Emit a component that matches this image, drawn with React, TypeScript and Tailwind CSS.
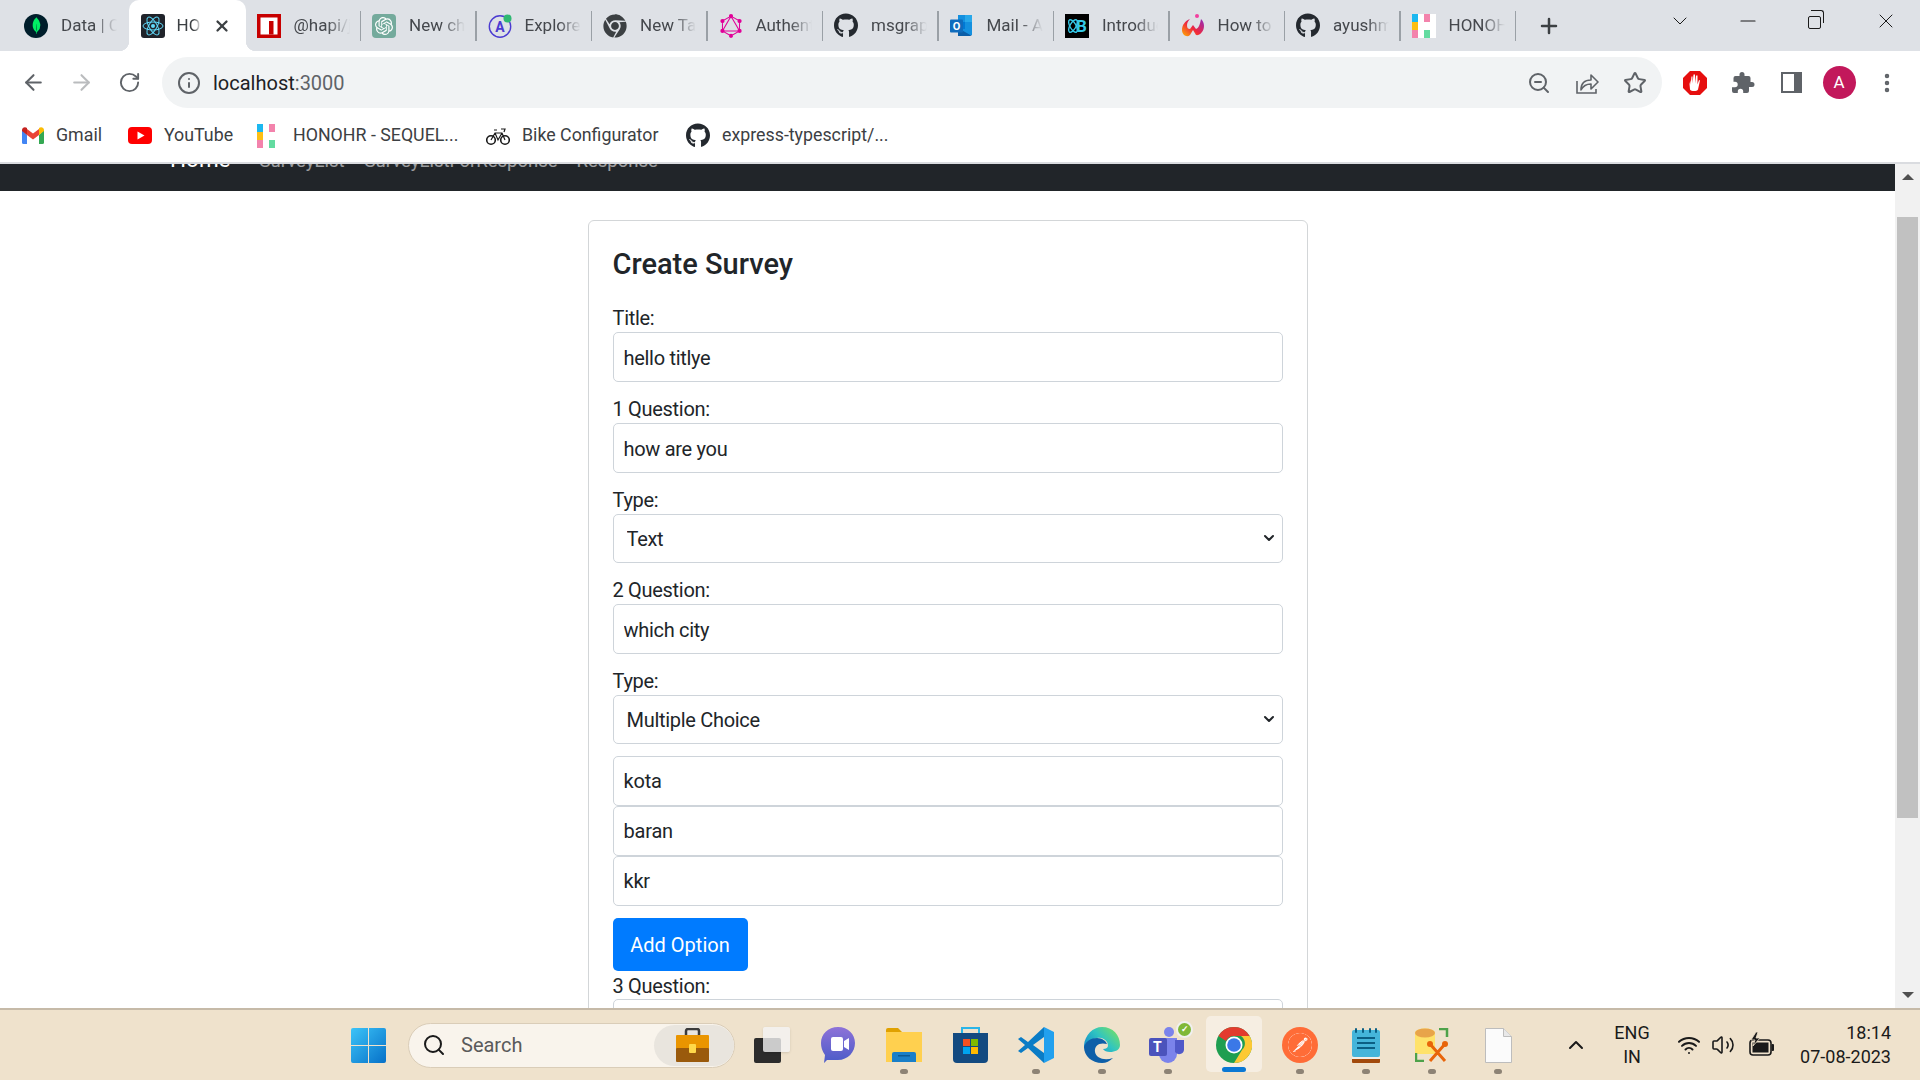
import React from 'react';
import { FaGithub, FaChrome } from 'react-icons/fa';
import { SiMongodb, SiOpenai, SiGraphql, SiPostman } from 'react-icons/si';
import { ChevronDown, ChevronUp, Minus, X, Plus, ArrowLeft, ArrowRight, RotateCw, Info, ZoomOut, Star, MoreVertical, Search, Wifi, Volume2 } from 'lucide-react';

const ReactIcon = () => (
  <svg width="24" height="24" viewBox="0 0 24 24">
    <rect width="24" height="24" rx="3" fill="#20232a" />
    <g fill="none" stroke="#61dafb" strokeWidth="1">
      <ellipse cx="12" cy="12" rx="10" ry="4" />
      <ellipse cx="12" cy="12" rx="10" ry="4" transform="rotate(60 12 12)" />
      <ellipse cx="12" cy="12" rx="10" ry="4" transform="rotate(120 12 12)" />
    </g>
    <circle cx="12" cy="12" r="2" fill="#61dafb" />
  </svg>
);

const MongoIcon = () => (
  <div className="w-6 h-6 rounded-full bg-[#001e2b] flex items-center justify-center">
    <SiMongodb className="text-[#00ed64] text-[17px]" />
  </div>
);

const NpmIcon = () => (
  <svg width="24" height="24" viewBox="0 0 24 24">
    <rect width="24" height="24" fill="#c70000" />
    <rect x="3.5" y="3.5" width="17" height="17" fill="#fff" />
    <rect x="12" y="7" width="4.5" height="13.5" fill="#c70000" />
  </svg>
);

const OpenAiIcon = () => (
  <div className="w-6 h-6 rounded-[4px] bg-[#74aa9c] flex items-center justify-center">
    <SiOpenai className="text-white text-[18px]" />
  </div>
);

const ExploreIcon = () => (
  <svg width="24" height="24" viewBox="0 0 24 24">
    <circle cx="12" cy="12.5" r="10.7" fill="none" stroke="#4b3bd1" strokeWidth="1.4" />
    <text x="12" y="17.5" textAnchor="middle" fontSize="14" fontWeight="700" fontFamily="Roboto" fill="#4b3bd1">A</text>
    <circle cx="19.5" cy="4.5" r="4" fill="#2eb872" />
  </svg>
);

const OutlookIcon = () => (
  <svg width="24" height="24" viewBox="0 0 24 24">
    <path d="M8 1h14v20H8z" fill="#1490df" />
    <path d="M15 1h7v7h-7z" fill="#28a8ea" />
    <path d="M8 8h7v7H8z" fill="#0078d4" />
    <path d="M8 14l14 8H8z" fill="#0a5ea8" />
    <rect y="5.5" width="13" height="13" rx="1" fill="#0f6cbd" />
    <text x="6.5" y="16" textAnchor="middle" fontSize="11" fontWeight="700" fontFamily="Roboto" fill="#fff">O</text>
  </svg>
);

const IntroIcon = () => (
  <svg width="24" height="24" viewBox="0 0 24 24">
    <rect width="24" height="24" fill="#000" />
    <g fill="none" stroke="#35c8e6" strokeWidth="1.4">
      <ellipse cx="8" cy="12" rx="7" ry="3" transform="rotate(60 8 12)" />
      <ellipse cx="8" cy="12" rx="7" ry="3" transform="rotate(120 8 12)" />
    </g>
    <text x="16.5" y="18" textAnchor="middle" fontSize="17" fontWeight="700" fontFamily="Roboto" fill="#35c8e6">B</text>
  </svg>
);

const HowToIcon = () => (
  <svg width="24" height="24" viewBox="0 0 24 24">
    <defs>
      <linearGradient id="howto" x1="0" y1="1" x2="1" y2="0">
        <stop offset="0" stopColor="#ffb100" />
        <stop offset="0.45" stopColor="#f0283c" />
        <stop offset="1" stopColor="#8a2bc9" />
      </linearGradient>
    </defs>
    <circle cx="16" cy="2" r="2" fill="#f23fa0" />
    <path d="M9 5C4 7 1 11 1 16c0 5 5 8 8 5l3-5 3 5c3 1 8-3 8-9 0-3-1-5-3-7-1 5-2 9-5 10l-3-4-3 4c-2 0-3-1-3-4 0-3 2-5 4-7z" fill="url(#howto)" />
  </svg>
);

const HonoIcon = () => (
  <svg width="24" height="24" viewBox="0 0 24 24">
    <rect width="24" height="24" fill="#fff" />
    <rect x="0" y="0" width="6" height="8" fill="#1cb8f0" />
    <rect x="12" y="0" width="6" height="8" fill="#f383ac" />
    <rect x="0" y="8" width="6" height="8" fill="#fdbf14" />
    <rect x="0" y="16" width="6" height="8" fill="#f383ac" />
    <rect x="12" y="16" width="6" height="8" fill="#63dba0" />
  </svg>
);

const GmailIcon = () => (
  <svg width="22" height="17" viewBox="0 0 22 17">
    <path d="M0 3v12.500a1.500 1.500 0 0 0 1.500 1.500H5V8z" fill="#4285f4" />
    <path d="M17 8v9h3.500a1.500 1.500 0 0 0 1.500-1.500V3z" fill="#34a853" />
    <path d="M5 8V2l6 4.500L17 2v6l-6 4.500z" fill="#ea4335" />
    <path d="M0 3c0-2.500 3-3.700 5-2v7L0 4z" fill="#c5221f" />
    <path d="M17 1c2-1.700 5-.5 5 2v1l-5 4z" fill="#fbbc04" />
  </svg>
);

const YoutubeIcon = () => (
  <svg width="24" height="17" viewBox="0 0 24 17">
    <rect width="24" height="17" rx="4" fill="#f00" />
    <path d="M9.500 4.500v8l7-4z" fill="#fff" />
  </svg>
);

const BikeIcon = () => (
  <svg width="24" height="20" viewBox="0 0 24 20" fill="none" stroke="#1a1a1a">
    <circle cx="5" cy="14" r="4.300" strokeWidth="1.600" />
    <circle cx="19" cy="14" r="4.300" strokeWidth="1.600" />
    <path d="M5 14l4-7h7l3 7M9 7l3 7 4-7M8 4h3M15 3h4l-1 3" strokeWidth="1.200" />
  </svg>
);

const ShareIcon = () => (
  <svg width="24" height="24" viewBox="0 0 24 24" fill="none" stroke="#5f6368" strokeWidth="1.600">
    <path d="M2 10v12h19v-4" />
    <path d="M6 19c0-7 4-10 10-10V4l7 7-7 7v-5c-5 0-8 2-10 6z" strokeLinejoin="round" />
  </svg>
);

const UblockIcon = () => (
  <svg width="24" height="24" viewBox="0 0 24 24">
    <path d="M7 0h10l7 7v10l-7 7H7l-7-7V7z" fill="#e60f0f" />
    <path d="M6.500 13l1-4v5l1-8.500 1 0v7l1-9h1.500v9l1-8 1.500 0v9l1.500-4.500 1 .5-2 9c-1 2-7 2-8 0z" fill="#fff" />
  </svg>
);

const PuzzleIcon = () => (
  <svg width="24" height="24" viewBox="0 0 24 24" fill="#5f6368">
    <path d="M21 11h-1.500V7a2 2 0 0 0-2-2h-4V3.500a2.500 2.500 0 0 0-5 0V5h-4a2 2 0 0 0-2 2v3.800h1.500a2.700 2.700 0 0 1 0 5.400H1V20a2 2 0 0 0 2 2h3.800v-1.500a2.700 2.700 0 0 1 5.400 0V22H16a2 2 0 0 0 2-2v-4h3a2.500 2.500 0 0 0 0-5z" />
  </svg>
);

const SidePanelIcon = () => (
  <div className="w-[21px] h-[21px] border-[#5f6368] border-y-[2px] border-l-[2px] border-r-[8px]" />
);

const WindowsIcon = () => (
  <svg width="35" height="35" viewBox="0 0 35 35">
    <defs>
      <linearGradient id="win" x1="0" y1="0" x2="1" y2="1">
        <stop offset="0" stopColor="#3cc4f8" />
        <stop offset="1" stopColor="#0670c8" />
      </linearGradient>
    </defs>
    <path d="M2 0h15v17H0V2a2 2 0 0 1 2-2zM18 0h15a2 2 0 0 1 2 2v15H18zM0 18h17v17H2a2 2 0 0 1-2-2zM18 18h17v15a2 2 0 0 1-2 2H18z" fill="url(#win)" />
  </svg>
);

const BriefcaseIcon = () => (
  <svg width="33" height="34" viewBox="0 0 33 34">
    <path d="M10 8V3a2 2 0 0 1 2-2h9a2 2 0 0 1 2 2v5" fill="none" stroke="#3b3b3b" strokeWidth="2.500" />
    <rect y="7" width="33" height="14" rx="1" fill="#ea9500" />
    <rect y="20" width="33" height="14" rx="1" fill="#9a5a0c" />
    <rect x="13" y="16" width="7" height="9" rx="1" fill="#ffd84a" />
  </svg>
);

const TaskViewIcon = () => (
  <div className="relative w-[36px] h-[36px]">
    <div className="absolute left-0 bottom-0 w-[27px] h-[25px] bg-[#2c2c2c] rounded-[2px]" />
    <div className="absolute right-0 top-0 w-[27px] h-[25px] bg-[#f4f4f4]/80 rounded-[2px] shadow-sm" />
  </div>
);

const MeetIcon = () => (
  <svg width="34" height="36" viewBox="0 0 34 36">
    <defs>
      <linearGradient id="meet" x1="0" y1="0" x2="0" y2="1">
        <stop offset="0" stopColor="#8e72d8" />
        <stop offset="1" stopColor="#4a5bc8" />
      </linearGradient>
    </defs>
    <path d="M17 0c10 0 17 7 17 16s-7 17-17 17H6l-3 3 1-8C1 24 0 20 0 16 0 7 7 0 17 0z" fill="url(#meet)" />
    <rect x="10" y="10" width="12" height="14" rx="2" fill="#fff" />
    <path d="M23 14l5-3v12l-5-3z" fill="#fff" />
  </svg>
);

const FolderIcon = () => (
  <svg width="36" height="34" viewBox="0 0 36 34">
    <path d="M0 2a2 2 0 0 1 2-2h10l4 4h-16z" fill="#e0a100" />
    <path d="M0 4h36v30H0z" fill="#ffd04f" />
    <path d="M6 34V26a2 2 0 0 1 2-2h20a2 2 0 0 1 2 2v8z" fill="#1a7fc8" />
    <rect x="12" y="27" width="12" height="1.500" fill="#0c5a94" />
  </svg>
);

const StoreIcon = () => (
  <svg width="35" height="36" viewBox="0 0 35 36">
    <path d="M9 7V1h17v6" fill="none" stroke="#2ab5e8" strokeWidth="2" />
    <path d="M0 6h35v26a4 4 0 0 1-4 4H4a4 4 0 0 1-4-4z" fill="#134a80" />
    <rect x="10" y="12" width="7" height="7" fill="#f25022" />
    <rect x="18" y="12" width="7" height="7" fill="#7fba00" />
    <rect x="10" y="20" width="7" height="7" fill="#00a4ef" />
    <rect x="18" y="20" width="7" height="7" fill="#ffb900" />
  </svg>
);

const VscodeIcon = () => (
  <svg width="36" height="36" viewBox="0 0 36 36">
    <path d="M26 0l10 5v26l-10 5z" fill="#22a0ee" />
    <path d="M26 0L10 15 3 10 0 12l7 6-7 6 3 2 7-5 16 15v-10l-11-8 11-8z" fill="#0a7cc6" />
  </svg>
);

const EdgeIcon = () => (
  <svg width="36" height="36" viewBox="0 0 36 36">
    <defs>
      <linearGradient id="edgeTop" x1="0" y1="1" x2="1" y2="0.300">
        <stop offset="0" stopColor="#0c7fcf" />
        <stop offset="0.600" stopColor="#30c5c0" />
        <stop offset="1" stopColor="#6ddc70" />
      </linearGradient>
    </defs>
    <path d="M18 0c11 0 18 8 18 18 0 5-5 7-10 7-3 0-6-1-7-3 5 0 6-3 4-7-2-3-6-5-10-4C6 13 2 17 0 22c-1-12 8-22 18-22z" fill="url(#edgeTop)" />
    <path d="M0 20c2-6 7-9 13-9 5 0 9 3 10 6-7-2-13 1-12 8 1 6 9 9 18 6-3 3-7 5-11 5C8 36 0 29 0 20z" fill="#0e5fa8" />
  </svg>
);

const TeamsIcon = () => (
  <div className="relative left-[3px] w-[44px] h-[38px]">
    <svg className="absolute left-0 top-0" width="44" height="38" viewBox="0 0 44 38">
      <circle cx="20" cy="6" r="5" fill="#7b83eb" />
      <path d="M10 12h18v16a9 9 0 0 1-18 0z" fill="#7b83eb" />
      <path d="M26 14h9v10a5 5 0 0 1-9 2z" fill="#5059c9" />
      <rect x="0" y="12" width="18" height="18" rx="2" fill="#4b53bc" />
    </svg>
    <span className="absolute left-[4px] top-[11px] text-white text-[14px] font-bold">T</span>
    <div className="absolute right-0 top-[-5px] w-[17px] h-[17px] rounded-full bg-[#7fb838] border-2 border-[#f0f0f0] flex items-center justify-center text-white text-[9px] font-bold">✓</div>
  </div>
);

const ChromeIcon = () => (
  <svg width="36" height="36" viewBox="0 0 36 36">
    <circle cx="18" cy="18" r="18" fill="#1e9e50" />
    <path d="M18 0a18 18 0 0 1 15.600 9H18a9 9 0 0 0-8 5L2.400 9A18 18 0 0 1 18 0z" fill="#e33b2e" />
    <path d="M33.600 9A18 18 0 0 1 18 36l8-13a9 9 0 0 0-1-14z" fill="#fcc934" />
    <circle cx="18" cy="18" r="8.500" fill="#fff" />
    <circle cx="18" cy="18" r="6.800" fill="#3b78e7" />
  </svg>
);

const PostmanIcon = () => (
  <div className="w-9 h-9 rounded-full bg-[#ff6c37] flex items-center justify-center">
    <SiPostman className="text-[#ff6c37] bg-white rounded-full text-[24px]" />
  </div>
);

const NotepadIcon = () => (
  <svg width="28" height="35" viewBox="0 0 28 35">
    <rect y="2" width="28" height="27" rx="2" fill="#45b5da" />
    <rect y="29" width="28" height="6" rx="1" fill="#a24a0c" />
    <rect y="29" width="28" height="2" fill="#f2efe8" />
    <g fill="#0b5f84">
      <rect x="3" y="0" width="2" height="5" rx="1" />
      <rect x="10" y="0" width="2" height="5" rx="1" />
      <rect x="17" y="0" width="2" height="5" rx="1" />
      <rect x="23" y="0" width="2" height="5" rx="1" />
      <rect x="5" y="9" width="18" height="2" />
      <rect x="5" y="14" width="18" height="2" />
      <rect x="5" y="19" width="18" height="2" />
    </g>
  </svg>
);

const DbToolIcon = () => (
  <svg width="34" height="34" viewBox="0 0 34 34">
    <path d="M0 5c0-6 20-6 20 0v21H0z" fill="#ffe26a" />
    <ellipse cx="10" cy="5" rx="10" ry="4.500" fill="#e8a44a" />
    <path d="M24 1h8v8M1 25v8h8" fill="none" stroke="#4ea24a" strokeWidth="2.500" />
    <path d="M15 16l15 17M30 16L15 33" stroke="#e8650a" strokeWidth="3" />
    <circle cx="15" cy="16" r="3" fill="#e8650a" />
    <circle cx="30" cy="16" r="3" fill="#e8650a" />
  </svg>
);

const FileIcon = () => (
  <svg width="27" height="35" viewBox="0 0 27 35">
    <path d="M.5.500h18l8 8v26H.5z" fill="#fbfbfb" stroke="#bdbdbd" />
    <path d="M18.500.500v8h8" fill="#e8e8e8" stroke="#bdbdbd" />
  </svg>
);

const BatteryIcon = () => (
  <svg width="25" height="26" viewBox="0 0 25 26">
    <rect x="1" y="8" width="21" height="15" rx="3" fill="none" stroke="#1a1a1a" strokeWidth="1.600" />
    <rect x="3.500" y="10.500" width="16" height="10" fill="#1a1a1a" />
    <rect x="22.500" y="12" width="2.500" height="7" rx="1" fill="#1a1a1a" />
    <path d="M7 0L2 8h4l-2 6 7-8H7l2-6z" fill="#1a1a1a" stroke="#efe2cc" strokeWidth=".8" />
  </svg>
);

const tabs: { title: string; icon: React.ReactNode; active?: boolean; noSep?: boolean }[] = [
  { title: 'Data | Cloud', icon: <MongoIcon />, noSep: true },
  { title: 'HONOHR', icon: <ReactIcon />, active: true },
  { title: '@hapi/joi', icon: <NpmIcon /> },
  { title: 'New chat', icon: <OpenAiIcon /> },
  { title: 'Explore', icon: <ExploreIcon /> },
  { title: 'New Tab', icon: <FaChrome className="text-[24px] text-[#3c4043]" /> },
  { title: 'Authentication', icon: <SiGraphql className="text-[24px] text-[#e10098]" /> },
  { title: 'msgraph', icon: <FaGithub className="text-[25px] text-[#24292f]" /> },
  { title: 'Mail - A', icon: <OutlookIcon /> },
  { title: 'Introduction', icon: <IntroIcon /> },
  { title: 'How to', icon: <HowToIcon /> },
  { title: 'ayushman', icon: <FaGithub className="text-[25px] text-[#24292f]" /> },
  { title: 'HONOHR', icon: <HonoIcon /> },
];

const bookmarks: { title: string; icon: React.ReactNode; width: string; iconBox: string }[] = [
  { title: 'Gmail', icon: <GmailIcon />, width: 'w-[106px]', iconBox: 'w-[22px]' },
  { title: 'YouTube', icon: <YoutubeIcon />, width: 'w-[129px]', iconBox: 'w-[24px]' },
  { title: 'HONOHR - SEQUEL...', icon: <HonoIcon />, width: 'w-[229px]', iconBox: 'w-[24px]' },
  { title: 'Bike Configurator', icon: <BikeIcon />, width: 'w-[200px]', iconBox: 'w-[24px]' },
  { title: 'express-typescript/...', icon: <FaGithub className="text-[25px] text-[#24292f]" />, width: 'w-[240px]', iconBox: 'w-[24px]' },
];

const taskbarApps: { icon: React.ReactNode; running?: boolean; active?: boolean }[] = [
  { icon: <TaskViewIcon /> },
  { icon: <MeetIcon /> },
  { icon: <FolderIcon />, running: true },
  { icon: <StoreIcon /> },
  { icon: <VscodeIcon />, running: true },
  { icon: <EdgeIcon />, running: true },
  { icon: <TeamsIcon />, running: true },
  { icon: <ChromeIcon />, active: true },
  { icon: <PostmanIcon />, running: true },
  { icon: <NotepadIcon />, running: true },
  { icon: <DbToolIcon />, running: true },
  { icon: <FileIcon />, running: true },
];

const BrowserTab = ({ title, icon, active, noSep }: (typeof tabs)[number]) => {
  if (active) {
    return (
      <div className="relative w-[117px] h-[51px] bg-white rounded-t-[10px] flex items-center pl-[12px] shrink-0">
        <span className="absolute -left-[10px] bottom-0 w-[10px] h-[10px] bg-[radial-gradient(circle_at_0_0,#dee1e6_10px,#fff_10.5px)]" />
        <span className="absolute -right-[10px] bottom-0 w-[10px] h-[10px] bg-[radial-gradient(circle_at_100%_0,#dee1e6_10px,#fff_10.5px)]" />
        <div className="w-6 shrink-0">{icon}</div>
        <div className="ml-3 w-[24px] overflow-hidden whitespace-nowrap text-[17px] text-[#3c4043] [mask-image:linear-gradient(to_right,black_70%,transparent)]">
          {title}
        </div>
        <X className="ml-[12px] text-[#3c4043]" size={18} strokeWidth={3} />
      </div>
    );
  }

  return (
    <div className="w-[115.5px] h-[51px] flex items-center pl-[11px] shrink-0">
      <div className="w-6 h-6 shrink-0 flex items-center justify-center">{icon}</div>
      <div className="ml-[13px] w-[56px] overflow-hidden whitespace-nowrap text-[17px] text-[#45484d] [mask-image:linear-gradient(to_right,black_60%,transparent)]">
        {title}
      </div>
      {!noSep && <span className="ml-auto w-[1.5px] h-[30px] bg-[#9aa0a6]" />}
    </div>
  );
};

const Field = ({ label, value }: { label: string; value: string }) => (
  <>
    <label className="block h-[30px] leading-[33px] tracking-[-0.3px] text-[#212529]">{label}</label>
    <input
      readOnly
      value={value}
      className="block w-full h-[50px] border border-[#ced4da] rounded-[5px] pl-[10px] pt-[1px] tracking-[-0.3px] text-[#212529] outline-none bg-white mb-[11px]"
    />
  </>
);

const SelectField = ({ value, options, className }: { value: string; options: string[]; className: string }) => (
  <>
    <label className="block h-[30px] leading-[33px] tracking-[-0.3px] text-[#212529]">Type:</label>
    <div className={`relative h-[49px] ${className}`}>
      <select
        value={value}
        onChange={() => undefined}
        className="appearance-none block w-full h-full border border-[#ced4da] rounded-[5px] pl-[13px] tracking-[-0.3px] text-[#212529] outline-none bg-white"
      >
        {options.map((o) => (
          <option key={o}>{o}</option>
        ))}
      </select>
      <ChevronDown className="absolute right-[6px] top-[16px] text-[#212529]" size={16} strokeWidth={3} />
    </div>
  </>
);

const OptionInput = ({ value }: { value: string }) => (
  <input
    readOnly
    value={value}
    className="block w-full h-[50px] border border-[#ced4da] rounded-[5px] pl-[10px] tracking-[-0.2px] text-[#212529] outline-none bg-white"
  />
);

const App = () => {
  return (
    <div className="w-[1920px] h-[1080px] flex flex-col overflow-hidden bg-white [font-family:Roboto,sans-serif]">
      {/* tab strip */}
      <div className="h-[51px] shrink-0 bg-[#dee1e6] flex pl-[13px]">
        {tabs.map((t) => (
          <BrowserTab key={t.title + t.active} {...t} />
        ))}
        <div className="ml-[21px] h-[51px] flex items-center">
          <Plus className="text-[#3c4043]" size={24} strokeWidth={2.5} />
        </div>
        <div className="ml-auto flex pt-[9px] text-[#1a1a1a]">
          <ChevronDown className="mr-[44px]" size={24} strokeWidth={1} />
          <Minus className="mr-[44px]" size={24} strokeWidth={1.2} />
          <div className="relative w-[24px] h-[24px] mr-[46px]">
            <div className="absolute left-[4px] bottom-[4px] w-[13px] h-[13px] border border-[#1a1a1a] rounded-[2px]" />
            <div className="absolute left-[7px] top-[1px] w-[13px] h-[13px] border-t border-r border-[#1a1a1a] rounded-tr-[3px]" />
          </div>
          <X className="mr-[22px]" size={24} strokeWidth={1} />
        </div>
      </div>

      {/* toolbar */}
      <div className="h-[58px] shrink-0 flex items-center pt-[5px] pl-[9px]">
        <div className="w-12 flex justify-center"><ArrowLeft className="text-[#5f6368]" size={25} strokeWidth={2} /></div>
        <div className="w-12 flex justify-center"><ArrowRight className="text-[#babcbe]" size={25} strokeWidth={2} /></div>
        <div className="w-12 flex justify-center"><RotateCw className="text-[#5f6368]" size={23} strokeWidth={2} /></div>
        <div className="ml-[9px] w-[1500px] h-[51px] rounded-full bg-[#f1f3f4] flex items-center pl-[15px] pr-[3px]">
          <Info className="text-[#5f6368]" size={24} strokeWidth={2} />
          <span className="ml-3 text-[20px] text-[#202124]">
            localhost<span className="text-[#5f6368]">:3000</span>
          </span>
          <div className="ml-auto flex">
            <div className="w-12 flex justify-center"><ZoomOut className="text-[#5f6368]" size={24} strokeWidth={2} /></div>
            <div className="w-12 flex justify-center"><ShareIcon /></div>
            <div className="w-12 flex justify-center"><Star className="text-[#5f6368]" size={24} strokeWidth={2} /></div>
          </div>
        </div>
        <div className="ml-[9px] w-12 flex justify-center"><UblockIcon /></div>
        <div className="w-12 flex justify-center"><PuzzleIcon /></div>
        <div className="w-12 flex justify-center"><SidePanelIcon /></div>
        <div className="w-12 flex justify-center">
          <div className="w-[33px] h-[33px] rounded-full bg-[#c2185b] text-white text-[17px] flex items-center justify-center">A</div>
        </div>
        <div className="w-12 flex justify-center"><MoreVertical className="text-[#5f6368]" size={24} strokeWidth={2.5} /></div>
      </div>

      {/* bookmarks */}
      <div className="h-[55px] shrink-0 flex items-center pl-[22px] border-b-2 border-[#dadce0]">
        {bookmarks.map((b) => (
          <div key={b.title} className={`${b.width} flex items-center shrink-0`}>
            <div className={`${b.iconBox} flex items-center justify-center`}>{b.icon}</div>
            <span className="ml-3 text-[17.800px] text-[#3c4043] whitespace-nowrap">{b.title}</span>
          </div>
        ))}
      </div>

      {/* page */}
      <div className="flex-1 min-h-0 flex">
        <div className="flex-1 min-w-0 overflow-hidden">
          <div className="h-[27px] bg-[#212529] overflow-hidden pl-[170px]">
            <div className="flex items-baseline -mt-[24px]">
              <span className="text-[22.500px] text-white leading-[38px]">Home</span>
              <span className="ml-[29px] text-[18.500px] text-white/55">SurveyList</span>
              <span className="ml-5 text-[18.500px] text-white/55">SurveyListForResponse</span>
              <span className="ml-[19px] text-[18.500px] text-white/55">Response</span>
            </div>
          </div>

          <div className="mt-[29px] mx-auto w-[720px] border border-[#d3d6d8] rounded-[6px] px-[24px] pb-5 text-[20px]">
            <h2 className="pt-[21px] mb-[30px] h-[51px] text-[29px] font-medium leading-[44px] text-[#212529]">Create Survey</h2>
            <Field label="Title:" value="hello titlye" />
            <Field label="1 Question:" value="how are you" />
            <SelectField value="Text" options={['Text', 'Multiple Choice']} className="mb-[11px]" />
            <Field label="2 Question:" value="which city" />
            <SelectField value="Multiple Choice" options={['Text', 'Multiple Choice']} className="mb-[12px]" />
            <OptionInput value="kota" />
            <OptionInput value="baran" />
            <OptionInput value="kkr" />
            <button className="block mt-3 w-[135px] h-[53px] rounded-[5px] bg-[#007bff] text-white text-[20px]">Add Option</button>
            <label className="block h-[28px] leading-[30px] tracking-[-0.3px] text-[#212529]">3 Question:</label>
            <OptionInput value="" />
          </div>
        </div>

        {/* scrollbar */}
        <div className="w-[25px] shrink-0 bg-[#f1f1f1] flex flex-col items-center">
          <div className="h-[26px] flex items-center">
            <div className="w-0 h-0 border-x-[6px] border-x-transparent border-b-[6px] border-b-[#505050]" />
          </div>
          <div className="mt-[27px] w-[21px] h-[601px] bg-[#c1c1c1]" />
          <div className="mt-auto h-[26px] flex items-center">
            <div className="w-0 h-0 border-x-[6px] border-x-transparent border-t-[6px] border-t-[#505050]" />
          </div>
        </div>
      </div>

      {/* taskbar */}
      <div className="h-[72px] shrink-0 bg-[#efe2cc] border-t-2 border-[#c6baa8] flex items-center pl-[335px]">
        <div className="w-[66px] flex justify-center"><WindowsIcon /></div>
        <div className="ml-[7px] w-[327px] h-[45px] rounded-full bg-[#f9f4ec] border border-[#dacdb8] flex items-center pl-[13px]">
          <Search className="text-[#1a1a1a]" size={24} strokeWidth={2} />
          <span className="ml-[15px] text-[20px] text-[#5a5a5a]">Search</span>
          <div className="ml-auto w-[80px] h-[41px] rounded-full bg-[#e9e5de] flex items-center justify-center pr-[4px]">
            <BriefcaseIcon />
          </div>
        </div>
        <div className="ml-[4px] flex">
          {taskbarApps.map((app, i) => (
            <div key={i} className="relative w-[66px] h-[70px] flex items-center justify-center">
              {app.active && <div className="absolute left-[5px] top-[6px] w-[56px] h-[56px] rounded-[5px] bg-[#f6eee2]" />}
              <div className="relative">{app.icon}</div>
              {app.running && <div className="absolute left-[29px] top-[59px] w-[8px] h-[5px] rounded-full bg-[#8d8375]" />}
              {app.active && <div className="absolute left-[21px] top-[57px] w-[24px] h-[5px] rounded-full bg-[#0a78d4]" />}
            </div>
          ))}
        </div>
        <ChevronUp className="ml-[33px] text-[#1a1a1a]" size={24} strokeWidth={2} />
        <div className="ml-[21px] w-[46px] text-center text-[18px] leading-[24px] text-[#1a1a1a]">
          ENG<br />IN
        </div>
        <Wifi className="ml-[22px] text-[#1a1a1a]" size={24} strokeWidth={2} />
        <Volume2 className="ml-[10px] text-[#1a1a1a]" size={24} strokeWidth={1.600} />
        <div className="ml-[14px]"><BatteryIcon /></div>
        <div className="ml-auto mr-[29px] text-right text-[18px] leading-[24px] text-[#1a1a1a]">
          18:14<br />07-08-2023
        </div>
      </div>
    </div>
  );
};

export default App;
